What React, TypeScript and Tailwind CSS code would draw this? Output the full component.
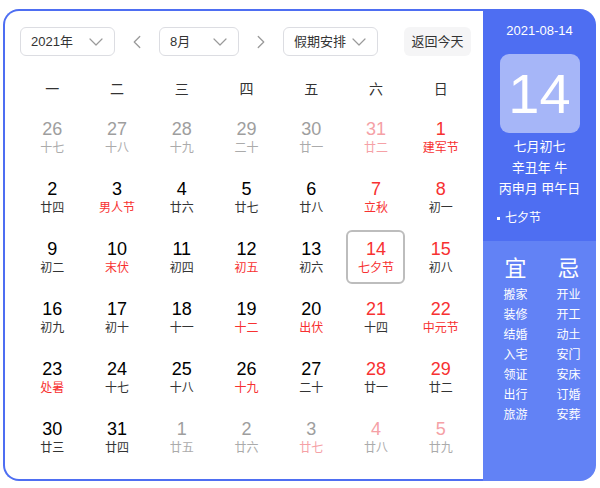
import { ChevronDown, ChevronLeft, ChevronRight } from "lucide-react";

type Cell = { d: string; l: string; dc: string; lc: string };

const K = "text-[#000]";
const L = "text-[#333]";
const R = "text-[#f73131]";
const G = "text-[#9e9e9e]";
const GL = "text-[#ababab]";
const P = "text-[#f5a1a6]";

const days: Cell[] = [
  { d: "26", l: "十七", dc: G, lc: GL },
  { d: "27", l: "十八", dc: G, lc: GL },
  { d: "28", l: "十九", dc: G, lc: GL },
  { d: "29", l: "二十", dc: G, lc: GL },
  { d: "30", l: "廿一", dc: G, lc: GL },
  { d: "31", l: "廿二", dc: P, lc: P },
  { d: "1", l: "建军节", dc: R, lc: R },

  { d: "2", l: "廿四", dc: K, lc: L },
  { d: "3", l: "男人节", dc: K, lc: R },
  { d: "4", l: "廿六", dc: K, lc: L },
  { d: "5", l: "廿七", dc: K, lc: L },
  { d: "6", l: "廿八", dc: K, lc: L },
  { d: "7", l: "立秋", dc: R, lc: R },
  { d: "8", l: "初一", dc: R, lc: L },

  { d: "9", l: "初二", dc: K, lc: L },
  { d: "10", l: "末伏", dc: K, lc: R },
  { d: "11", l: "初四", dc: K, lc: L },
  { d: "12", l: "初五", dc: K, lc: R },
  { d: "13", l: "初六", dc: K, lc: L },
  { d: "14", l: "七夕节", dc: R, lc: R },
  { d: "15", l: "初八", dc: R, lc: L },

  { d: "16", l: "初九", dc: K, lc: L },
  { d: "17", l: "初十", dc: K, lc: L },
  { d: "18", l: "十一", dc: K, lc: L },
  { d: "19", l: "十二", dc: K, lc: R },
  { d: "20", l: "出伏", dc: K, lc: R },
  { d: "21", l: "十四", dc: R, lc: L },
  { d: "22", l: "中元节", dc: R, lc: R },

  { d: "23", l: "处暑", dc: K, lc: R },
  { d: "24", l: "十七", dc: K, lc: L },
  { d: "25", l: "十八", dc: K, lc: L },
  { d: "26", l: "十九", dc: K, lc: R },
  { d: "27", l: "二十", dc: K, lc: L },
  { d: "28", l: "廿一", dc: R, lc: L },
  { d: "29", l: "廿二", dc: R, lc: L },

  { d: "30", l: "廿三", dc: K, lc: L },
  { d: "31", l: "廿四", dc: K, lc: L },
  { d: "1", l: "廿五", dc: G, lc: GL },
  { d: "2", l: "廿六", dc: G, lc: GL },
  { d: "3", l: "廿七", dc: G, lc: P },
  { d: "4", l: "廿八", dc: P, lc: GL },
  { d: "5", l: "廿九", dc: P, lc: GL },
];

const weekdays = ["一", "二", "三", "四", "五", "六", "日"];
const yi = ["搬家", "装修", "结婚", "入宅", "领证", "出行", "旅游"];
const ji = ["开业", "开工", "动土", "安门", "安床", "订婚", "安葬"];

function Select({ label, width }: { label: string; width: string }) {
  return (
    <div
      className={`${width} h-[29px] flex items-center justify-between pl-[10px] pr-[6px] border border-[#dcdde2] rounded-[6px] text-[13px] text-[#333]`}
    >
      <span>{label}</span>
      <ChevronDown size={24} strokeWidth={1.2} className="text-[#9a9a9a]" />
    </div>
  );
}

export default function App() {
  return (
    <div
      className="w-[600px] h-[488px] bg-white pt-[9px] pl-[3px]"
      style={{ fontFamily: '"Liberation Sans", "Noto Sans CJK SC", sans-serif' }}
    >
      <div className="flex w-[593px] h-[472px]">
        <div className="w-[480px] h-full border-2 border-r-0 border-[#4e6ef2] rounded-l-[16px] pt-[16px] pl-[15px] pr-[8px]">
          <div className="flex items-center h-[29px]">
            <Select label="2021年" width="w-[95px]" />
            <div className="w-[44px] flex justify-center">
              <ChevronLeft size={22} strokeWidth={1.4} className="text-[#9a9a9a]" />
            </div>
            <Select label="8月" width="w-[80px]" />
            <div className="w-[44px] flex justify-center">
              <ChevronRight size={22} strokeWidth={1.4} className="text-[#9a9a9a]" />
            </div>
            <Select label="假期安排" width="w-[95px]" />
            <div className="ml-[26px] w-[67px] h-[29px] rounded-[6px] bg-[#f5f5f6] flex items-center justify-center text-[13px] text-[#333]">
              返回今天
            </div>
          </div>

          <div className="grid grid-cols-7 w-[453px] mt-[15px] h-[36px] items-center">
            {weekdays.map((w) => (
              <div key={w} className="text-center text-[14px] text-[#333]">
                {w}
              </div>
            ))}
          </div>

          <div className="grid grid-cols-7 w-[453px]">
            {days.map((c, i) => (
              <div key={i} className="h-[60px] flex items-center justify-center">
                <div
                  className={`w-[59px] h-[54px] flex flex-col items-center justify-center rounded-[6px] ${
                    i === 19 ? "border-2 border-[#bdbdbd]" : ""
                  }`}
                >
                  <div className={`text-[18px] leading-[22px] ${c.dc}`}>{c.d}</div>
                  <div className={`text-[12px] leading-[17px] ${c.lc}`}>{c.l}</div>
                </div>
              </div>
            ))}
          </div>
        </div>

        <div className="w-[113px] h-full rounded-r-[16px] overflow-hidden flex flex-col text-white">
          <div className="h-[232px] bg-[#4e6ef2] flex flex-col items-center pt-[13px]">
            <div className="text-[13px] leading-[18px]">2021-08-14</div>
            <div className="mt-[14px] w-[80px] h-[79px] rounded-[9px] bg-[#a6b6f8] flex items-center justify-center text-[56px] leading-none">
              14
            </div>
            <div className="mt-[3px] text-[13px] leading-[21px] text-center">
              <div>七月初七</div>
              <div>辛丑年 牛</div>
              <div>丙申月 甲午日</div>
            </div>
            <div className="self-start ml-[14px] mt-[10px] flex items-center text-[12px] leading-[18px]">
              <span className="w-[3px] h-[3px] bg-white mr-[5px]" />
              七夕节
            </div>
          </div>
          <div className="flex-1 bg-[#6282f5] flex pl-[6px] pt-[14px]">
            <div className="w-[53px] flex flex-col items-center">
              <div className="text-[22px] leading-[28px] mb-[2px]">宜</div>
              {yi.map((t) => (
                <div key={t} className="text-[12px] leading-[20px]">
                  {t}
                </div>
              ))}
            </div>
            <div className="w-[53px] flex flex-col items-center">
              <div className="text-[22px] leading-[28px] mb-[2px]">忌</div>
              {ji.map((t) => (
                <div key={t} className="text-[12px] leading-[20px]">
                  {t}
                </div>
              ))}
            </div>
          </div>
        </div>
      </div>
    </div>
  );
}
